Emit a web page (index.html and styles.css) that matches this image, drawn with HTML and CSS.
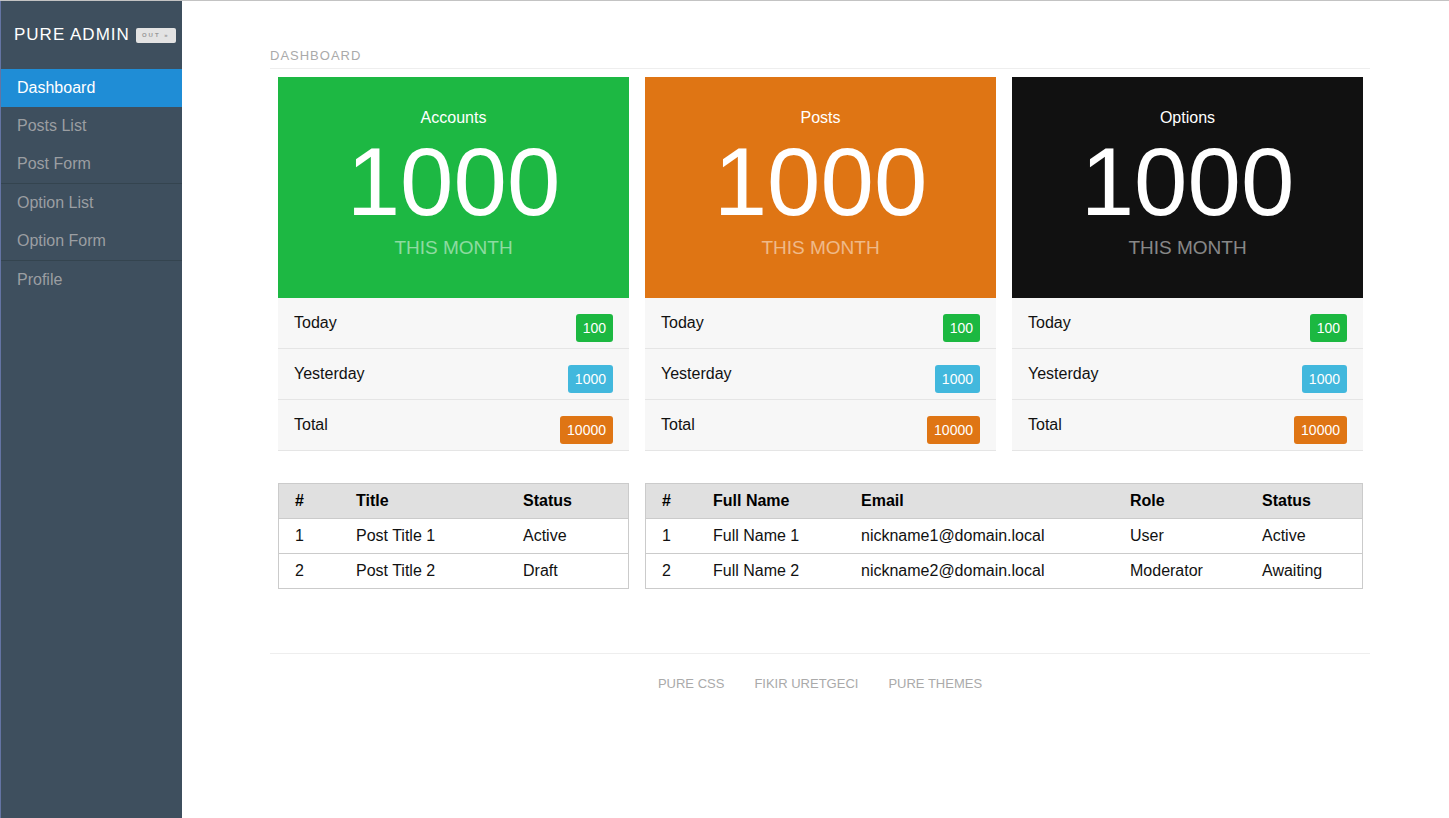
FILE: index.html
```html
<!DOCTYPE html>
<html lang="en">
<head>
<meta charset="utf-8">
<title>Pure Admin</title>
<link rel="stylesheet" href="styles.css">
</head>
<body>
<div class="layout">
  <aside class="sidebar">
    <div class="brand">
      <span class="brand-name">PURE ADMIN</span>
      <span class="brand-badge">OUT »</span>
    </div>
    <ul class="menu">
      <li class="menu-item active">Dashboard</li>
      <li class="menu-item">Posts List</li>
      <li class="menu-item sep">Post Form</li>
      <li class="menu-item">Option List</li>
      <li class="menu-item sep">Option Form</li>
      <li class="menu-item">Profile</li>
    </ul>
  </aside>
  <main class="main">
    <div class="content">
      <h1 class="page-title">DASHBOARD</h1>
      <div class="grid cards">
        <div class="card">
          <div class="card-head green">
            <div class="card-title">Accounts</div>
            <div class="card-number">1000</div>
            <div class="card-sub">THIS MONTH</div>
          </div>
          <ul class="stat-list">
            <li class="stat-row"><span>Today</span><span class="badge b-green">100</span></li>
            <li class="stat-row"><span>Yesterday</span><span class="badge b-blue">1000</span></li>
            <li class="stat-row"><span>Total</span><span class="badge b-orange">10000</span></li>
          </ul>
        </div>
        <div class="card">
          <div class="card-head orange">
            <div class="card-title">Posts</div>
            <div class="card-number">1000</div>
            <div class="card-sub">THIS MONTH</div>
          </div>
          <ul class="stat-list">
            <li class="stat-row"><span>Today</span><span class="badge b-green">100</span></li>
            <li class="stat-row"><span>Yesterday</span><span class="badge b-blue">1000</span></li>
            <li class="stat-row"><span>Total</span><span class="badge b-orange">10000</span></li>
          </ul>
        </div>
        <div class="card">
          <div class="card-head black">
            <div class="card-title">Options</div>
            <div class="card-number">1000</div>
            <div class="card-sub">THIS MONTH</div>
          </div>
          <ul class="stat-list">
            <li class="stat-row"><span>Today</span><span class="badge b-green">100</span></li>
            <li class="stat-row"><span>Yesterday</span><span class="badge b-blue">1000</span></li>
            <li class="stat-row"><span>Total</span><span class="badge b-orange">10000</span></li>
          </ul>
        </div>
      </div>
      <div class="grid tables">
        <table class="tbl tbl-posts">
          <thead>
            <tr><th class="c-num">#</th><th class="c-title">Title</th><th>Status</th></tr>
          </thead>
          <tbody>
            <tr><td>1</td><td>Post Title 1</td><td>Active</td></tr>
            <tr><td>2</td><td>Post Title 2</td><td>Draft</td></tr>
          </tbody>
        </table>
        <table class="tbl tbl-users">
          <thead>
            <tr><th class="c-unum">#</th><th class="c-name">Full Name</th><th class="c-email">Email</th><th class="c-role">Role</th><th>Status</th></tr>
          </thead>
          <tbody>
            <tr><td>1</td><td>Full Name 1</td><td>nickname1@domain.local</td><td>User</td><td>Active</td></tr>
            <tr><td>2</td><td>Full Name 2</td><td>nickname2@domain.local</td><td>Moderator</td><td>Awaiting</td></tr>
          </tbody>
        </table>
      </div>
      <footer class="footer">
        <a class="footer-link">PURE CSS</a>
        <a class="footer-link">FIKIR URETGECI</a>
        <a class="footer-link">PURE THEMES</a>
      </footer>
    </div>
  </main>
</div>
</body>
</html>
```
FILE: styles.css
```css
html, body {
  margin: 0;
  padding: 0;
}
body {
  font-family: "Liberation Sans", Arial, sans-serif;
  color: #111;
  background: #fff;
  border-top: 1px solid #c3c3c3;
}
.layout {
  display: flex;
  min-height: 817px;
}
.sidebar {
  width: 181px;
  flex: none;
  background: #3e4f5e;
  border-left: 1px solid #6474a3;
}
.brand {
  height: 68px;
  display: flex;
  align-items: center;
  padding-left: 13px;
}
.brand-name {
  color: #fff;
  font-size: 17px;
  letter-spacing: 1px;
}
.brand-badge {
  margin-left: 6px;
  width: 40px;
  height: 15px;
  line-height: 15px;
  background: #e3e3e3;
  border-radius: 2px;
  color: #999;
  font-size: 6px;
  font-weight: bold;
  letter-spacing: 2px;
  text-align: center;
}
.menu {
  list-style: none;
  margin: 0;
  padding: 0;
}
.menu-item {
  height: 38px;
  line-height: 38px;
  padding-left: 16px;
  font-size: 16px;
  color: #9b9ea2;
}
.menu-item.active {
  background: #1f8dd6;
  color: #fff;
}
.menu-item.sep {
  border-bottom: 1px solid #34444f;
}
.main {
  flex: 1;
}
.content {
  width: 1100px;
  margin-left: 88px;
}
.page-title {
  margin: 0;
  padding: 47px 0 4px;
  font-size: 13px;
  line-height: 16px;
  font-weight: normal;
  letter-spacing: 1px;
  color: #aaa;
  border-bottom: 1px solid #eee;
}
.grid {
  display: grid;
  grid-template-columns: repeat(3, 1fr);
  gap: 16px;
  padding: 0 7px 0 8px;
}
.cards {
  margin-top: 8px;
}
.card-head {
  text-align: center;
  color: #fff;
  padding: 31px 0 38px;
}
.green { background: #1db843; }
.orange { background: #df7514; }
.black { background: #111; }
.card-title {
  font-size: 16px;
  line-height: 20px;
}
.card-number {
  margin-top: 6px;
  font-size: 96px;
  line-height: 96px;
}
.card-sub {
  margin-top: 6px;
  font-size: 19px;
  line-height: 24px;
  color: rgba(255, 255, 255, 0.5);
}
.stat-list {
  list-style: none;
  margin: 0;
  padding: 0;
}
.stat-row {
  display: flex;
  justify-content: space-between;
  align-items: flex-start;
  background: #f7f7f7;
  border-bottom: 1px solid #e5e5e5;
  padding: 15px 16px 15px;
  height: 20px;
  font-size: 16px;
  line-height: 20px;
}
.badge {
  margin-top: 1px;
  height: 28px;
  line-height: 28px;
  padding: 0 7px;
  border-radius: 3px;
  color: #fff;
  font-size: 14px;
}
.b-green { background: #1cb841; }
.b-blue { background: #42b8dd; }
.b-orange { background: #df7514; }
.tables {
  margin-top: 32px;
}
.tbl {
  border-collapse: collapse;
  border: 1px solid #cbcbcb;
  width: 100%;
  font-size: 16px;
}
.tbl-users {
  grid-column: span 2;
}
.tbl th, .tbl td {
  text-align: left;
  padding: 8px 16px;
  line-height: 18px;
  border-bottom: 1px solid #cbcbcb;
}
.tbl th {
  background: #e0e0e0;
  font-weight: bold;
  color: #000;
}
.tbl td {
  color: #111;
}
.c-num { width: 29px; }
.c-title { width: 135px; }
.c-unum { width: 19px; }
.c-name { width: 116px; }
.c-email { width: 237px; }
.c-role { width: 100px; }
.footer {
  margin-top: 64px;
  border-top: 1px solid #eee;
  padding-top: 22px;
  display: flex;
  justify-content: center;
  gap: 30px;
}
.footer-link {
  font-size: 13px;
  line-height: 16px;
  color: #aaa;
}
```
